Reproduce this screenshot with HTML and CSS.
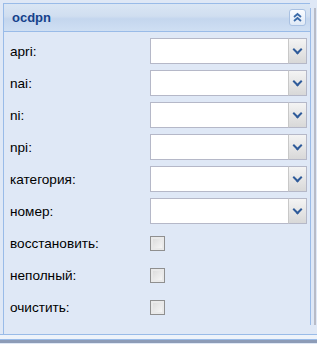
FILE: index.html
```html
<!DOCTYPE html>
<html lang="ru">
<head>
    <meta charset="UTF-8">
    <title>ocdpn</title>
    <link rel="stylesheet" href="styles.css">
</head>
<body>
    <div class="frame">
        <div class="panel">
            <div class="panel-header">
                <span class="panel-title">ocdpn</span>
                <button class="tool-btn" aria-label="Свернуть">
                    <svg width="11" height="11" viewBox="0 0 11 11">
                        <path d="M2 5 L5.5 2 L9 5 M2 9 L5.5 6 L9 9" fill="none" stroke="#3a6aa8" stroke-width="1.8"/>
                    </svg>
                </button>
            </div>
            <div class="panel-body">
                <div class="form-row">
                    <label>apri:</label>
                    <div class="combo"><input type="text"><span class="trigger"></span></div>
                </div>
                <div class="form-row">
                    <label>nai:</label>
                    <div class="combo"><input type="text"><span class="trigger"></span></div>
                </div>
                <div class="form-row">
                    <label>ni:</label>
                    <div class="combo"><input type="text"><span class="trigger"></span></div>
                </div>
                <div class="form-row">
                    <label>npi:</label>
                    <div class="combo"><input type="text"><span class="trigger"></span></div>
                </div>
                <div class="form-row">
                    <label>категория:</label>
                    <div class="combo"><input type="text"><span class="trigger"></span></div>
                </div>
                <div class="form-row">
                    <label>номер:</label>
                    <div class="combo"><input type="text"><span class="trigger"></span></div>
                </div>
                <div class="form-row">
                    <label>восстановить:</label>
                    <span class="check"></span>
                </div>
                <div class="form-row">
                    <label>неполный:</label>
                    <span class="check"></span>
                </div>
                <div class="form-row">
                    <label>очистить:</label>
                    <span class="check"></span>
                </div>
            </div>
        </div>
        <div class="scroll-edge"></div>
    </div>
    <div class="bottom-bar"></div>
</body>
</html>
```

FILE: styles.css
```css
* {
    margin: 0;
    padding: 0;
    box-sizing: border-box;
}

body {
    width: 317px;
    height: 344px;
    background: #dfe8f6;
    font-family: "Liberation Sans", Arial, sans-serif;
    overflow: hidden;
}

.frame {
    display: flex;
    height: 335px;
    padding: 3px 0 0 3px;
    border-bottom: 1px solid #99bbe8;
}

.panel {
    width: 307px;
    display: flex;
    flex-direction: column;
    border-left: 1px solid #99bbe8;
    border-top: 1px solid #99bbe8;
}

.panel-header {
    height: 28px;
    display: flex;
    align-items: center;
    justify-content: space-between;
    padding: 0 4px 1px 8px;
    background: linear-gradient(to bottom, #dae6f4 0%, #d0def0 45%, #c4d6ee 55%, #cfdff3 100%);
    border-bottom: 1px solid #99bbe8;
}

.panel-title {
    color: #15428b;
    font-weight: bold;
    font-size: 13px;
}

.tool-btn {
    width: 17px;
    height: 17px;
    display: flex;
    align-items: center;
    justify-content: center;
    background: linear-gradient(to bottom, #fafcff, #dfe9f6);
    border: 1px solid #a9c1e2;
    border-radius: 3px;
    cursor: pointer;
}

.panel-body {
    flex: 1;
    padding: 3px 0 0 5px;
}

.form-row {
    height: 32px;
    display: flex;
    align-items: center;
}

.form-row label {
    width: 141px;
    padding-left: 1px;
    font-size: 13.6px;
    color: #000;
}

.combo {
    display: flex;
    width: 157px;
    height: 26px;
}

.combo input {
    flex: 1;
    width: 0;
    border: 1px solid #b5b8c8;
    border-right: none;
    background: #fff;
    outline: none;
}

.combo .trigger {
    width: 19px;
    border: 1px solid #b5b8c8;
    border-left: 1px solid #c8c8c8;
    background: linear-gradient(to bottom, #f4f4f4, #d8d8d8);
    position: relative;
}

.combo .trigger::after {
    content: "";
    position: absolute;
    left: 5px;
    top: 7px;
    width: 5px;
    height: 5px;
    border-right: 2px solid #2f5b9a;
    border-bottom: 2px solid #2f5b9a;
    transform: rotate(45deg);
}

.check {
    width: 15px;
    height: 15px;
    border: 1px solid #8f8f8f;
    background: linear-gradient(135deg, #d8d8d8, #fafafa);
    box-shadow: inset 0 0 0 2px #e9e9e9;
}

.scroll-edge {
    width: 6px;
    border-left: 1px solid #99bbe8;
    border-right: 2px solid #b8bcc8;
    height: 317px;
    margin-top: 5px;
}

.bottom-bar {
    height: 8px;
    border-top: 2px solid #eef3fa;
    background: linear-gradient(to bottom, #eef3fa 0, #eef3fa 2px, #99bbe8 2px, #99bbe8 3px, #8d9cb7 3px);
}
```
